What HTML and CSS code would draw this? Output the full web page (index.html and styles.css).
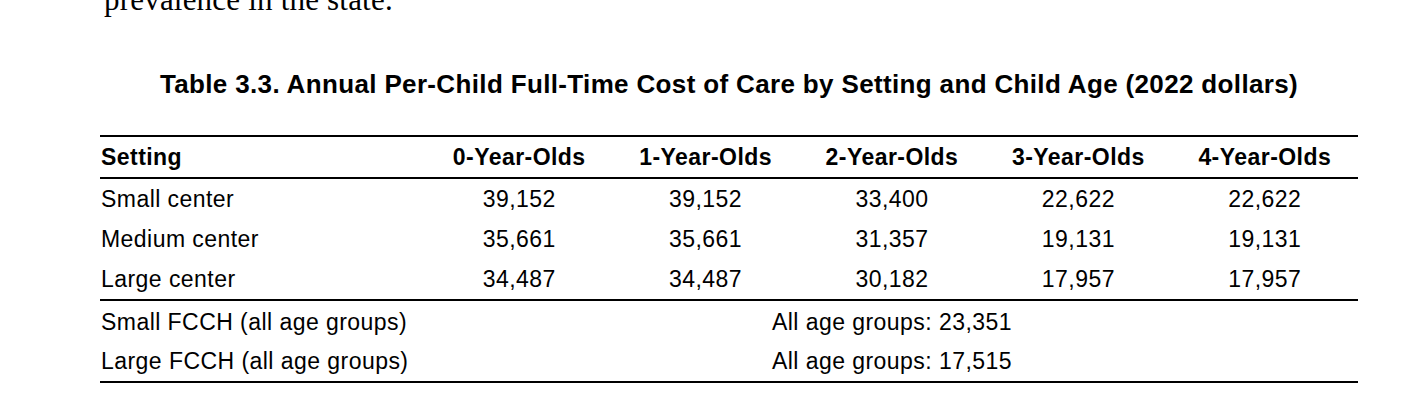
FILE: index.html
```html
<!DOCTYPE html>
<html lang="en">
<head>
<meta charset="utf-8">
<title>Table 3.3</title>
<link rel="stylesheet" href="styles.css">
</head>
<body>
<div class="page">
  <p class="lead">prevalence in the state.</p>
  <h2 class="caption">Table 3.3. Annual Per-Child Full-Time Cost of Care by Setting and Child Age (2022 dollars)</h2>
  <table class="cost">
    <colgroup>
      <col class="c-setting">
      <col class="c-age"><col class="c-age"><col class="c-age"><col class="c-age"><col class="c-age">
    </colgroup>
    <thead>
      <tr>
        <th class="setting">Setting</th>
        <th>0-Year-Olds</th>
        <th>1-Year-Olds</th>
        <th>2-Year-Olds</th>
        <th>3-Year-Olds</th>
        <th>4-Year-Olds</th>
      </tr>
    </thead>
    <tbody class="centers">
      <tr><td class="setting">Small center</td><td>39,152</td><td>39,152</td><td>33,400</td><td>22,622</td><td>22,622</td></tr>
      <tr><td class="setting">Medium center</td><td>35,661</td><td>35,661</td><td>31,357</td><td>19,131</td><td>19,131</td></tr>
      <tr class="last"><td class="setting">Large center</td><td>34,487</td><td>34,487</td><td>30,182</td><td>17,957</td><td>17,957</td></tr>
    </tbody>
    <tbody class="homes">
      <tr class="first"><td class="setting">Small FCCH (all age groups)</td><td colspan="5">All age groups: 23,351</td></tr>
      <tr class="last"><td class="setting">Large FCCH (all age groups)</td><td colspan="5">All age groups: 17,515</td></tr>
    </tbody>
  </table>
</div>
</body>
</html>
```
FILE: styles.css
```css
html, body {
  margin: 0;
  padding: 0;
  background: #ffffff;
  color: #000000;
}

body {
  overflow: hidden;
}

.page {
  margin-left: 100px;
  width: 1258px;
}

.lead {
  margin: -17px 0 0 0;
  padding-left: 4px;
  font-family: "Liberation Serif", "Times New Roman", serif;
  font-size: 31px;
  line-height: 33px;
  letter-spacing: 0.2px;
}

.caption {
  margin: 53px 0 0 0;
  font-family: "Liberation Sans", Arial, sans-serif;
  font-weight: bold;
  font-size: 26px;
  line-height: 30px;
  letter-spacing: 0.35px;
  text-align: center;
}

.cost {
  margin-top: 36px;
  width: 1258px;
  table-layout: fixed;
  border-collapse: separate;
  border-spacing: 0;
  font-family: "Liberation Sans", Arial, sans-serif;
  font-size: 23px;
  letter-spacing: 0.45px;
}

.c-setting { width: 326px; }
.c-age { width: 186.4px; }

.cost th,
.cost td {
  padding: 0;
  text-align: center;
  white-space: nowrap;
}

.cost .setting {
  text-align: left;
  padding-left: 1px;
}

.cost thead th {
  font-weight: bold;
  line-height: 40px;
  border-top: 2px solid #000;
  border-bottom: 2px solid #000;
}

.centers td {
  line-height: 40px;
}

.centers .last td {
  border-bottom: 2px solid #000;
}

.homes td {
  line-height: 39px;
}

.homes .first td {
  padding-top: 2px;
}

.homes .last td {
  border-bottom: 2px solid #000;
}
```
